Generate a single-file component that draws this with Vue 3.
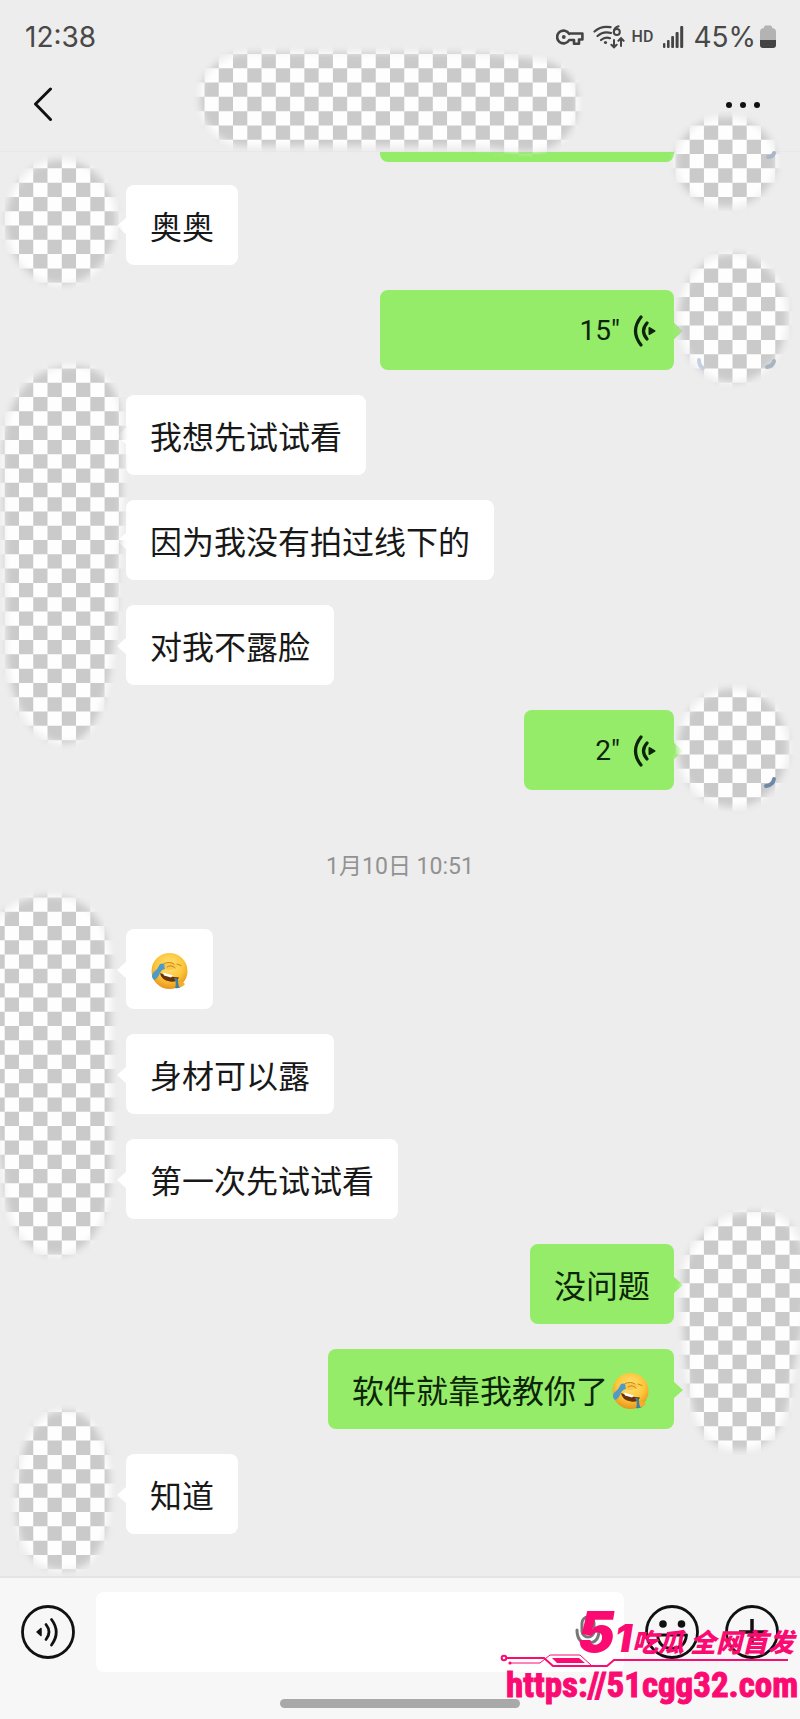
<script setup>
import { ref } from 'vue'

const draft = ref('')

const firstGroup = [
  { id: 1, side: 'left', text: '奥奥' },
  { id: 2, side: 'right', voice: '15"', size: 'long' },
  { id: 3, side: 'left', text: '我想先试试看' },
  { id: 4, side: 'left', text: '因为我没有拍过线下的' },
  { id: 5, side: 'left', text: '对我不露脸' },
  { id: 6, side: 'right', voice: '2"', size: 'short' }
]
const secondGroup = [
  { id: 7, side: 'left', text: '', emoji: true },
  { id: 8, side: 'left', text: '身材可以露' },
  { id: 9, side: 'left', text: '第一次先试试看' },
  { id: 10, side: 'right', text: '没问题' },
  { id: 11, side: 'right', text: '软件就靠我教你了', emoji: true },
  { id: 12, side: 'left', text: '知道' }
]
const groups = [
  { id: 'a', messages: firstGroup },
  { id: 'b', time: '1月10日 10:51', messages: secondGroup }
]

// Grey cells of the transparency checkerboard, as one path.
const cellW = 14.27
const cellH = 14.295
let cells = ''
for (let row = 3; row < 112; row++) {
  for (let col = -1; col < 57; col++) {
    if ((row + col) % 2 === 0) {
      const x = (4.7 + col * cellW).toFixed(2)
      const y = (-3.2 + row * cellH).toFixed(2)
      cells += `M${x} ${y}h${cellW}v${cellH}h-${cellW}z`
    }
  }
}
</script>

<template>
  <div class="phone">
    <header class="top">
      <div class="status">
        <span class="clock">12:38</span>
        <div class="status-icons">
          <svg class="key" width="28" height="18" viewBox="0 0 28 18" fill="none" stroke="#444" stroke-width="2.6" stroke-linejoin="round">
            <path d="M13.2 6A6.4 6.4 0 1 0 13.2 12H18V15.7H23V11.5H26.4V5.5H13.2Z" />
            <circle cx="7.8" cy="9" r="1.9" fill="#444" stroke="none" />
          </svg>
          <svg class="wifi" width="32" height="26" viewBox="0 0 32 26" fill="none" stroke="#444" stroke-width="2.2" stroke-linecap="round">
            <path d="M1.5 7.5C6 3.4 11.5 2 17.5 3.2M4.5 12C8.5 8.4 13 7.5 18 9M8 16C11 13.5 14 13.2 17 14.2" />
            <circle cx="12.5" cy="18.5" r="1.6" fill="#444" stroke="none" />
            <path d="M25.6 2.2C22.3 3.2 20.8 5.4 20.8 8" stroke-width="2" />
            <circle cx="23.8" cy="8" r="3" stroke-width="2" />
            <path d="M21 16V23M18.4 20.8L21 23.4L23.6 20.8M28 22V14.5M25.4 16.8L28 14.2L30.6 16.8" stroke-width="2" />
          </svg>
          <span class="hd">HD</span>
          <svg class="signal" width="22" height="22" viewBox="0 0 22 22" fill="#444">
            <rect x="1" y="17" width="2.4" height="5" rx="1" />
            <rect x="5" y="14" width="2.6" height="8" rx="1" />
            <rect x="9.2" y="10" width="2.8" height="12" rx="1" />
            <rect x="13.6" y="6" width="3" height="16" rx="1" />
            <rect x="18.2" y="0" width="3" height="22" rx="1" />
          </svg>
          <span class="percent">45%</span>
          <svg class="battery" width="16" height="24" viewBox="0 0 16 24">
            <path d="M4 3V2Q4 0.5 5.5 0.5H10.5Q12 .5 12 2V3Q16 3.3 16 7V15H0V7Q0 3.3 4 3Z" fill="#b3b3b3" />
            <path d="M0 15H16V20Q16 23 13 23H3Q0 23 0 20Z" fill="#444" />
          </svg>
        </div>
      </div>
      <nav class="nav">
        <button class="icon-button" aria-label="返回">
          <svg width="20" height="36" viewBox="0 0 20 36" fill="none" stroke="#111" stroke-width="3" stroke-linecap="round" stroke-linejoin="round">
            <path d="M16.5 3L1.5 18L16.5 33.500" />
          </svg>
        </button>
        <button class="icon-button" aria-label="更多">
          <svg width="36" height="36" viewBox="0 0 36 36" fill="#111">
            <circle cx="4" cy="19" r="3" /><circle cx="18" cy="19" r="3" /><circle cx="32" cy="19" r="3" />
          </svg>
        </button>
      </nav>
    </header>

    <main class="chat">
      <div class="scrolled-bubble"></div>
      <section v-for="group in groups" :key="group.id" class="group">
        <time v-if="group.time" class="time">{{ group.time }}</time>
        <div v-for="m in group.messages" :key="m.id" class="row" :class="m.side">
          <button v-if="m.voice" class="bubble voice" :class="m.size">
            <span>{{ m.voice }}</span>
            <svg width="24" height="32" viewBox="0 0 24 32" fill="none" stroke="#0c240a" stroke-width="3.200" stroke-linecap="round">
              <path d="M8 2Q-3 16 8 30M14 8Q7 16 14 24" />
              <path d="M16.500 13L21.500 16L16.500 19Z" fill="#0c240a" stroke-width="2" stroke-linejoin="round" />
            </svg>
          </button>
          <p v-else class="bubble">
            <span v-if="m.text">{{ m.text }}</span>
            <svg v-if="m.emoji" class="emoji" width="37" height="38" viewBox="0 0 37 38" role="img" aria-label="笑哭捂脸">
              <defs>
                <radialGradient id="face" cx="50%" cy="35%" r="65%">
                  <stop offset="0" stop-color="#ffe37a" />
                  <stop offset=".6" stop-color="#fcc63a" />
                  <stop offset="1" stop-color="#e8941c" />
                </radialGradient>
              </defs>
              <circle cx="18.500" cy="19" r="18" fill="url(#face)" />
              <path d="M9 21Q18 25 28 25.500Q25 31 19 29.500Q10 28 9 21Z" fill="#6b3208" />
              <path d="M12 20.500L22 23.500L20 25.500L13 23.500Z" fill="#fff" />
              <path d="M12.500 13Q19 7 27 14Q22 19 15 18Z" fill="#fbc84a" />
              <path d="M13 11.500Q19 9 23 12M16 15Q20 12 24 16M26 12L30 13.500" fill="none" stroke="#c98518" stroke-width="1" stroke-linecap="round" />
              <path d="M9 12Q14 10 13.500 15L14 17Q10.500 17.500 9 21Q6.500 27 3 28Q-.5 25 2 21Q7 17 9 12Z" fill="#4f9bc8" />
              <path d="M23 26Q27 25 27.500 31Q31 31 31 34Q28 37 24 36Q26 31 23 26Z" fill="#3f7f9f" />
              <path d="M27 30Q31 29 34 32Q32 35 28 35Z" fill="#f3ae2b" />
            </svg>
          </p>
        </div>
      </section>
    </main>

    <footer class="composer">
      <div class="tools">
        <button class="icon-button" aria-label="语音输入">
          <svg width="54" height="54" viewBox="0 0 54 54" fill="none" stroke="#111" stroke-width="2.800" stroke-linecap="round">
            <circle cx="27" cy="27" r="25.500" />
            <path d="M25 19.500Q31 27 25 34.500M30.500 14.500Q40 27 30.500 40" />
            <path d="M16 27L20 23.500V30.500Z" fill="#111" stroke-width="1.500" stroke-linejoin="round" />
          </svg>
        </button>
        <div class="field">
          <input v-model="draft" type="text" aria-label="消息" />
          <svg class="mic" width="26" height="34" viewBox="0 0 26 34" fill="none" stroke="#777" stroke-width="3" stroke-linecap="round">
            <rect x="7" y="2" width="12" height="20" rx="6" />
            <path d="M2 15Q2 28 13 28Q24 28 24 15M13 28V32" />
          </svg>
        </div>
        <button class="icon-button" aria-label="表情">
          <svg width="54" height="54" viewBox="0 0 54 54" fill="none" stroke="#111" stroke-width="2.800">
            <circle cx="27" cy="27" r="25.500" />
            <circle cx="18" cy="19" r="3.800" fill="#111" stroke="none" />
            <circle cx="36.500" cy="19" r="3.800" fill="#111" stroke="none" />
            <path d="M12.500 30H41.500Q40 43.500 27 43.500Q14 43.500 12.500 30Z" stroke-linejoin="round" />
          </svg>
        </button>
        <button class="icon-button" aria-label="更多功能">
          <svg width="54" height="54" viewBox="0 0 54 54" fill="none" stroke="#111" stroke-width="2.800">
            <circle cx="27" cy="27" r="25.500" />
            <path d="M27 14V40M14 27H40" stroke-width="3.500" />
          </svg>
        </button>
      </div>
      <div class="home-bar"></div>

      <div class="brand">
        <div class="brand-title"><span class="five">5</span><span class="one">1</span><span class="slogan">吃瓜 全网首发</span></div>
        <svg class="brand-line" width="290" height="14" viewBox="0 0 290 14" fill="none" stroke="#fb0a72" stroke-width="2">
          <circle cx="4" cy="4" r="2.300" />
          <path d="M6.500 4H44L53 12H107L114 6H288" />
          <path d="M10 9H40L50 1H80L91 11" stroke-width="1" />
          <circle cx="10" cy="9" r="1.600" fill="#fb0a72" stroke="none" />
          <path d="M52 4H79L85 9H57Z" fill="#fb0a72" stroke="none" />
        </svg>
        <a class="brand-link" href="https://51cgg32.com">https://51cgg32.com</a>
      </div>
    </footer>

    <svg class="erased" viewBox="0 0 800 1719" preserveAspectRatio="xMidYMin meet" aria-hidden="true">
      <defs>
        <filter id="feather" x="-50" y="0" width="900" height="1719" filterUnits="userSpaceOnUse">
          <feGaussianBlur stdDeviation="3.500" />
        </filter>
        <mask id="brush" x="0" y="0" width="800" height="1719" maskUnits="userSpaceOnUse">
          <g fill="#fff" filter="url(#feather)">
            <path d="M200 98C200 72 222 53 250 53H440C480 53 515 56 545 61C565 66 578 82 578 102C578 126 562 149 534 151C500 151 492 146 470 146H245C222 145 200 126 200 98Z" />
            <ellipse cx="61" cy="222" rx="55" ry="62" />
            <ellipse cx="726" cy="162" rx="50" ry="45" />
            <ellipse cx="733" cy="318" rx="54" ry="64" />
            <path d="M75 366C103 366 122 391 122 430C122 500 123 520 117 570C117 630 112 743 65 743C27 743 7 690 7 650C7 570 3 530 3 460C3 410 22 366 75 366Z" />
            <ellipse cx="733" cy="748" rx="55" ry="59" />
            <path d="M52 896C90 896 111 928 111 970V1170C111 1215 92 1255 57 1255C22 1255 6 1220 4 1180L-12 1080V950C-12 920 12 896 52 896Z" />
            <path d="M758 1212C790 1212 808 1240 806 1285C804 1340 795 1350 790 1390C786 1430 768 1450 740 1450C708 1450 694 1425 690 1390C684 1355 682 1325 683 1270C691 1243 714 1212 758 1212Z" />
            <path d="M64 1411C92 1411 107 1440 110 1480C111 1540 96 1570 65 1570C30 1570 17 1545 16 1505C17 1450 33 1411 64 1411Z" />
          </g>
        </mask>
      </defs>
      <g mask="url(#brush)">
        <rect width="800" height="1719" fill="#fefefe" />
        <path :d="cells" fill="#cacaca" />
      </g>
      <g fill="none" stroke-width="4" stroke-linecap="round">
        <path d="M768 157Q773 157 774 153" stroke="#a9b6c8" />
        <path d="M699 360Q699 366 703 368" stroke="#c5cfdf" />
        <path d="M767 367Q773 366 774 361" stroke="#a9b4c2" />
        <path d="M766 786Q773 785 774 779" stroke="#7187aa" />
      </g>
    </svg>
  </div>
</template>

<style>
body {
  margin: 0;
  background: #ededed;
}
</style>

<style scoped>
.phone {
  position: relative;
  display: flex;
  flex-direction: column;
  min-height: 100vh;
  overflow: hidden;
  background: #ededed;
  color: #181818;
  font-family: Roboto, "Noto Sans CJK SC", sans-serif;
}
.phone * {
  box-sizing: border-box;
}
.phone svg {
  display: block;
  flex: none;
}
.icon-button {
  display: block;
  padding: 0;
  border: 0;
  background: none;
}
.top {
  border-bottom: 1px solid #e8e8e8;
}
.status {
  display: flex;
  align-items: center;
  justify-content: space-between;
  height: 74px;
  padding: 0 24px 0 25px;
  color: #484848;
  font: 28px/36px Inter, sans-serif;
}
.status-icons {
  display: flex;
  align-items: center;
}
.wifi {
  margin-left: 9px;
}
.hd {
  margin: 0 9px 0 7px;
  font: 500 16px/36px Roboto, sans-serif;
}
.percent {
  margin: 0 4px 0 9px;
}
.nav {
  display: flex;
  align-items: center;
  justify-content: space-between;
  height: 77px;
  padding: 0 39px 26px 34px;
}
.nav svg {
  margin-top: 8px;
}
.chat {
  flex: 1;
  padding: 0 126px 42px;
}
.scrolled-bubble {
  width: 294px;
  height: 10px;
  margin: 0 0 23px auto;
  border-radius: 0 0 8px 8px;
  background: #95ec69;
}
.group {
  display: flex;
  flex-direction: column;
  gap: 25px;
}
.time {
  margin: 60px 0 20px;
  color: #929292;
  font-size: 23px;
  line-height: 34px;
  text-align: center;
}
.row {
  display: flex;
}
.right {
  justify-content: flex-end;
}
.bubble {
  position: relative;
  display: flex;
  align-items: center;
  min-height: 80px;
  margin: 0;
  padding: 16px 24px;
  border: 0;
  border-radius: 8px;
  background: #fff;
  color: #181818;
  font: 32px/48px "Noto Sans CJK SC", sans-serif;
}
.right .bubble {
  background: #95ec69;
  color: #0c240a;
}
.bubble::before {
  content: "";
  position: absolute;
  top: 32px;
  left: -9px;
  width: 10px;
  height: 18px;
  background: inherit;
  clip-path: polygon(100% 0, 0 50%, 100% 100%);
}
.right .bubble::before {
  right: -9px;
  left: auto;
  clip-path: polygon(0 0, 100% 50%, 0 100%);
}
.emoji {
  margin: 3px 1px 0;
}
span + .emoji {
  margin-left: 4px;
}
.bubble.voice {
  justify-content: flex-end;
  gap: 13px;
  padding: 17px 17px 15px 24px;
  font: 28px/48px Roboto, sans-serif;
}
.long {
  width: 294px;
}
.short {
  width: 150px;
}
.composer {
  position: relative;
  border-top: 2px solid #e4e4e4;
  background: #f7f7f7;
}
.tools {
  display: flex;
  align-items: center;
  gap: 21px;
  padding: 14px 21px 27px;
}
.tools .icon-button:last-child {
  margin-left: 5px;
}
.field {
  display: flex;
  flex: 1;
  align-items: center;
  height: 80px;
  padding: 0 23px;
  border-radius: 8px;
  background: #fff;
}
.field input {
  flex: 1;
  min-width: 0;
  height: 48px;
  padding: 0;
  border: 0;
  outline: 0;
  background: none;
  font: 32px/48px "Noto Sans CJK SC", sans-serif;
}
.home-bar {
  width: 30%;
  height: 9px;
  margin: 0 auto 11px;
  border-radius: 5px;
  background: #a9a9a9;
}
.brand {
  position: absolute;
  right: 0;
  bottom: 15px;
  z-index: 2;
  width: 300px;
  color: #fb0a72;
}
.brand-title {
  display: flex;
  align-items: baseline;
  justify-content: flex-end;
  height: 44px;
  padding-right: 6px;
  line-height: 44px;
  white-space: nowrap;
  font-style: italic;
  font-weight: 900;
}
.five {
  font-family: Inter, sans-serif;
  font-size: 56px;
}
.one {
  font-family: Inter, sans-serif;
  font-size: 38px;
}
.slogan {
  font-family: "Noto Sans CJK SC", sans-serif;
  font-size: 26px;
}
.brand-link {
  display: block;
  margin-left: 6px;
  color: inherit;
  font: bold 35px/36px "Liberation Sans Narrow", "Roboto Condensed", "Open Sans Condensed", sans-serif;
  text-decoration: none;
  white-space: nowrap;
  -webkit-text-stroke: 1px currentColor;
}
.erased {
  position: absolute;
  top: 0;
  left: 0;
  width: 100%;
  pointer-events: none;
}
</style>
